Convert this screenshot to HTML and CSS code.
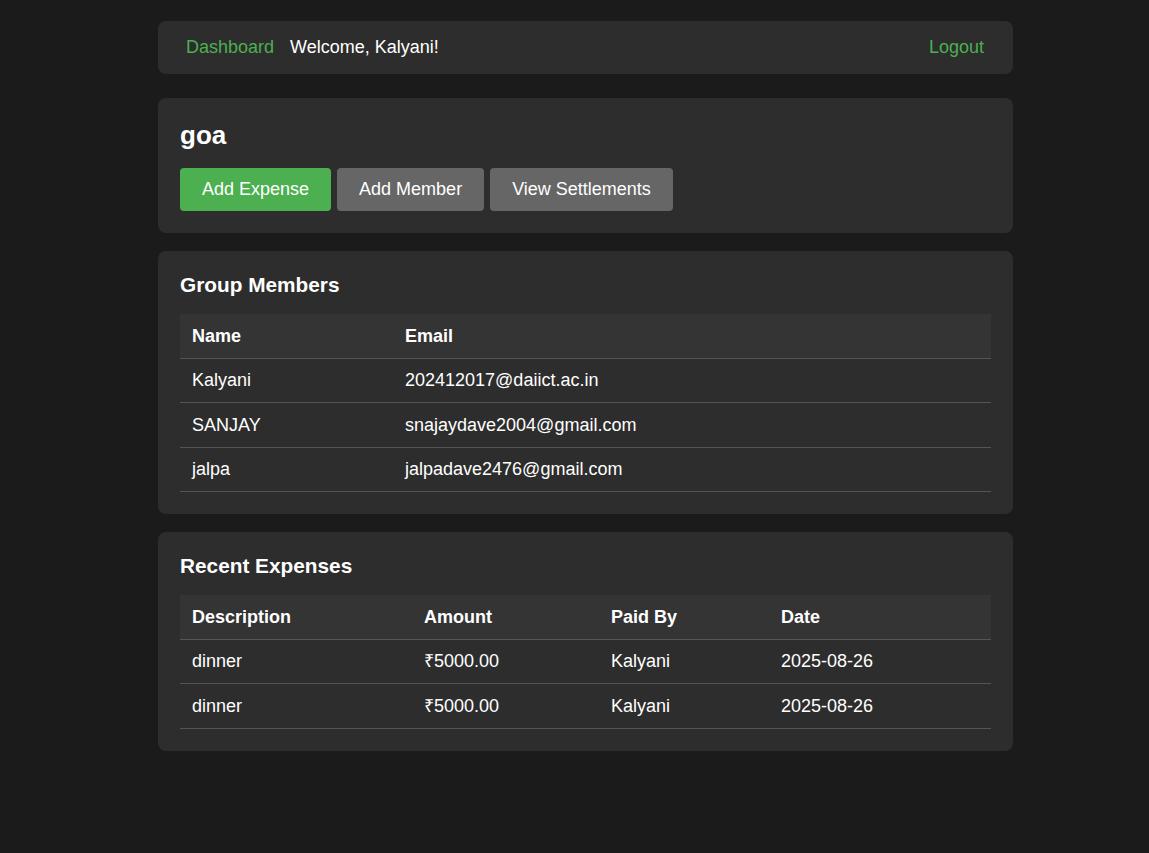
FILE: index.html
```html
<!DOCTYPE html>
<html lang="en">
<head>
<meta charset="utf-8">
<title>goa</title>
<link rel="stylesheet" href="styles.css">
</head>
<body>
<div class="container">
  <nav class="nav">
    <div class="nav-left">
      <a class="nav-link" href="#">Dashboard</a>
      <span class="welcome">Welcome, Kalyani!</span>
    </div>
    <a class="nav-link" href="#">Logout</a>
  </nav>

  <section class="card">
    <h2 class="group-title">goa</h2>
    <div class="actions">
      <a class="btn btn-primary" href="#">Add Expense</a>
      <a class="btn btn-secondary" href="#">Add Member</a>
      <a class="btn btn-secondary" href="#">View Settlements</a>
    </div>
  </section>

  <section class="card">
    <h3 class="section-title">Group Members</h3>
    <table class="table">
      <colgroup><col class="c-name"><col></colgroup>
      <thead>
        <tr><th>Name</th><th>Email</th></tr>
      </thead>
      <tbody>
        <tr><td>Kalyani</td><td>202412017@daiict.ac.in</td></tr>
        <tr><td>SANJAY</td><td>snajaydave2004@gmail.com</td></tr>
        <tr><td>jalpa</td><td>jalpadave2476@gmail.com</td></tr>
      </tbody>
    </table>
  </section>

  <section class="card">
    <h3 class="section-title">Recent Expenses</h3>
    <table class="table">
      <colgroup><col class="c-desc"><col class="c-amt"><col class="c-paid"><col></colgroup>
      <thead>
        <tr><th>Description</th><th>Amount</th><th>Paid By</th><th>Date</th></tr>
      </thead>
      <tbody>
        <tr><td>dinner</td><td>₹5000.00</td><td>Kalyani</td><td>2025-08-26</td></tr>
        <tr><td>dinner</td><td>₹5000.00</td><td>Kalyani</td><td>2025-08-26</td></tr>
      </tbody>
    </table>
  </section>
</div>
</body>
</html>
```

FILE: styles.css
```css
* { box-sizing: border-box; }

html, body {
  margin: 0;
  padding: 0;
  background: #1b1b1b;
  color: #ffffff;
  font-family: "Liberation Sans", Arial, sans-serif;
  font-size: 18px;
}

.container {
  width: 855px;
  margin: 21px 0 0 158px;
  padding-bottom: 40px;
}

.nav {
  display: flex;
  justify-content: space-between;
  align-items: center;
  background: #2d2d2d;
  border-radius: 8px;
  padding: 16px 29px 16px 28px;
  line-height: 21px;
  height: 53px;
  margin-bottom: 24px;
}

.nav-left {
  display: flex;
  align-items: center;
  gap: 16px;
}

.nav-link {
  color: #4caf50;
  text-decoration: none;
}

.welcome { color: #ffffff; }

.card {
  background: #2d2d2d;
  border-radius: 8px;
  padding: 22px;
  margin-bottom: 18px;
}

.group-title {
  margin: 0 0 18px;
  font-size: 26px;
  line-height: 30px;
  font-weight: bold;
}

.actions {
  display: flex;
  gap: 6px;
}

.btn {
  display: inline-block;
  padding: 11px 22px;
  line-height: 21px;
  height: 43px;
  border-radius: 4px;
  color: #ffffff;
  text-decoration: none;
  font-size: 18px;
}

.btn-primary { background: #4caf50; }
.btn-secondary { background: #666666; }

.section-title {
  margin: 0 0 17px;
  font-size: 20.8px;
  line-height: 24px;
  font-weight: bold;
}

.table {
  width: 100%;
  border-collapse: collapse;
  table-layout: fixed;
}

.c-name { width: 213px; }
.c-desc { width: 232px; }
.c-amt { width: 187px; }
.c-paid { width: 170px; }

.table th,
.table td {
  text-align: left;
  padding: 11.5px 12px 11.5px;
  line-height: 20.5px;
  border-bottom: 1px solid #555555;
}

.table th {
  background: #343434;
  font-weight: bold;
}
```
